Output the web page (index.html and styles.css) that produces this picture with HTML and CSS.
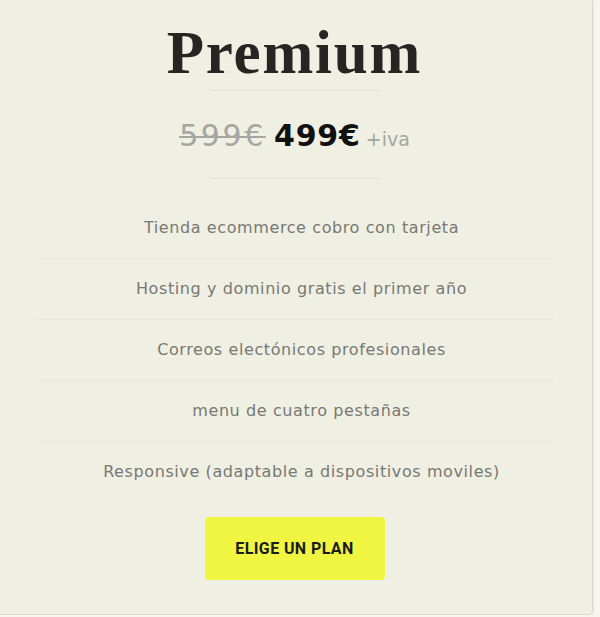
FILE: index.html
```html
<!DOCTYPE html>
<html lang="es">
<head>
  <meta charset="UTF-8"/>
  <meta name="viewport" content="width=device-width,initial-scale=1.0"/>
  <title>Premium</title>
  <link rel="stylesheet" href="styles.css">
</head>
<body>
  <div class="plan">
    <h2 class="plan-title">Premium</h2>
    <hr class="short-rule"/>
    <p class="price">
      <span class="old">599€</span>
      <span class="now">499€</span>
      <span class="tax">+iva</span>
    </p>
    <hr class="short-rule"/>

    <ul class="features">
      <li>Tienda ecommerce cobro con tarjeta</li>
      <li>Hosting y dominio gratis el primer año</li>
      <li>Correos electónicos profesionales</li>
      <li>menu de cuatro pestañas</li>
      <li>Responsive (adaptable a dispositivos moviles)</li>
    </ul>

    <div class="actions">
      <a href="#" class="btn">ELIGE UN PLAN</a>
    </div>
  </div>
</body>
</html>
```

FILE: styles.css
```css
body {
  margin: 0;
  background: #f6f6ef;
  font-family: "DejaVu Sans", "Open Sans", sans-serif;
  overflow: hidden;
}
.plan {
  box-sizing: border-box;
  width: 597px;
  height: 619px;
  margin: -4px 0 0 -4px;
  padding: 24px 38px 0;
  background: #f0efe3;
  border: 1px solid #d9d9d2;
  border-radius: 5px;
  box-shadow: 1px 1px 2px rgba(0,0,0,0.06);
  text-align: center;
}
.plan-title {
  margin: 0;
  font-family: "Liberation Serif", "DejaVu Serif", serif;
  font-weight: bold;
  font-size: 61px;
  line-height: 64px;
  color: #262522;
  letter-spacing: 1.8px;
}
.short-rule {
  width: 170px;
  margin: 0 auto;
  border: 0;
  border-top: 1px solid #dedfe0;
}
.plan-title + .short-rule { margin-top: 5px; }
.price {
  margin: 0;
  height: 87px;
  line-height: 90px;
  color: #111;
}
.price .old {
  margin-right: 3px;
  font-size: 30px;
  letter-spacing: 2.6px;
  color: #a5a5a2;
  text-decoration: line-through;
  text-decoration-thickness: 2px;
}
.price .now {
  font-size: 30px;
  font-weight: bold;
  letter-spacing: 0.8px;
}
.price .tax {
  font-size: 19px;
  color: #a5a5a2;
}
.features {
  list-style: none;
  margin: 19px 0 0;
  padding: 0;
}
.features li {
  height: 60px;
  padding-left: 14px;
  line-height: 60px;
  font-size: 16px;
  letter-spacing: 0.6px;
  color: #787874;
  border-bottom: 1px solid #e7e6da;
}
.features li:last-child { border-bottom: 0; }
.actions { margin-top: 15px; }
.btn {
  display: inline-block;
  width: 180px;
  height: 63px;
  line-height: 63px;
  background: #f0f542;
  border-radius: 4px;
  color: #1b1b1b;
  font-family: Roboto, "Liberation Sans", sans-serif;
  font-weight: bold;
  font-size: 16px;
  letter-spacing: 0.4px;
  text-decoration: none;
}
```
